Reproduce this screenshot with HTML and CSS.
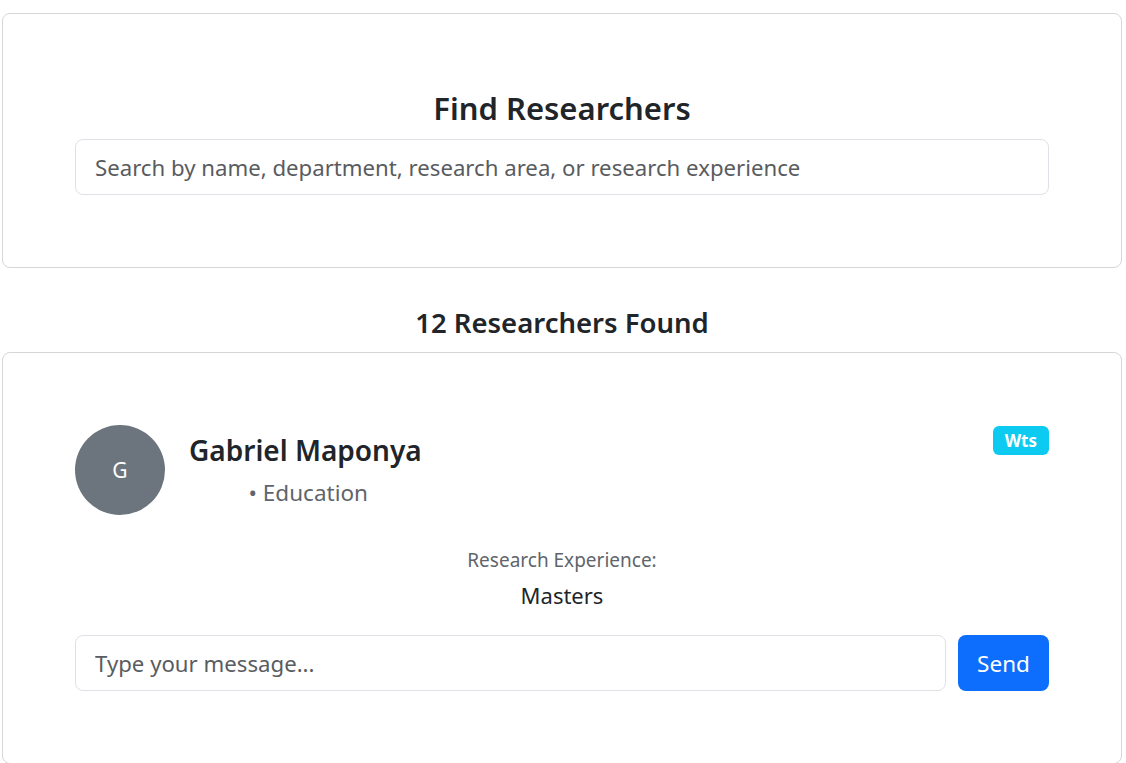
FILE: index.html
```html
<!DOCTYPE html>
<html lang="en">
<head>
<meta charset="utf-8">
<title>Find Researchers</title>
<link rel="stylesheet" href="styles.css">
</head>
<body>
<div class="page">
  <section class="card search-card">
    <h2 class="title">Find Researchers</h2>
    <input class="field" type="text" placeholder="Search by name, department, research area, or research experience">
  </section>

  <h3 class="count">12 Researchers Found</h3>

  <section class="card result-card">
    <div class="head">
      <div class="avatar">G</div>
      <div class="who">
        <div class="name">Gabriel Maponya</div>
        <div class="dept"> • Education</div>
      </div>
      <span class="badge">Wts</span>
    </div>
    <div class="exp">
      <div class="exp-label">Research Experience:</div>
      <div class="exp-value">Masters</div>
    </div>
    <div class="msg">
      <input class="field" type="text" placeholder="Type your message...">
      <button class="send" type="button">Send</button>
    </div>
  </section>
</div>
</body>
</html>
```

FILE: styles.css
```css
* { box-sizing: border-box; }
html, body { margin: 0; padding: 0; background: #fff; }
body {
  font-family: "Noto Sans", "Open Sans", sans-serif;
  color: #212529;
}
.page {
  width: 1120px;
  margin-left: 2px;
  padding-top: 13px;
}
.card {
  border: 1px solid #d6d6d6;
  border-radius: 8px;
  background: #fff;
  padding: 72px;
}
.search-card {
  padding-top: 75px;
  padding-bottom: 72px;
}
.title {
  margin: 0 0 12px;
  text-align: center;
  font-size: 31px;
  font-weight: 600;
  line-height: 38px;
}
.field {
  display: block;
  width: 100%;
  height: 56px;
  border: 1px solid #dee2e6;
  border-radius: 8px;
  padding: 0 19px;
  font-family: inherit;
  font-size: 22.2px;
  color: #212529;
  background: #fff;
  outline: none;
}
.field::placeholder { color: #595c5f; }
.count {
  margin: 38px 0 12px;
  text-align: center;
  font-size: 27.5px;
  font-weight: 600;
  line-height: 34px;
}
.result-card {
  padding-bottom: 72px;
}
.head {
  display: flex;
  align-items: flex-start;
  gap: 24px;
}
.avatar {
  width: 90px;
  height: 90px;
  flex: none;
  border-radius: 50%;
  background: #6c757d;
  color: #fff;
  display: flex;
  align-items: center;
  justify-content: center;
  font-size: 21px;
}
.who {
  text-align: center;
  padding-top: 6px;
}
.name {
  font-size: 28px;
  font-weight: 600;
  line-height: 38px;
}
.dept {
  font-size: 22.5px;
  line-height: 32px;
  color: #5f656b;
  white-space: pre;
  margin-top: 8px;
}
.badge {
  margin-left: auto;
  background: #0dcaf0;
  color: #fff;
  font-weight: 700;
  font-size: 17px;
  line-height: 29px;
  padding: 0 12px;
  border-radius: 6px;
  margin-top: 1px;
}
.exp {
  text-align: center;
  margin-top: 32px;
}
.exp-label {
  font-size: 19px;
  line-height: 26px;
  color: #5f656b;
}
.exp-value {
  font-size: 22px;
  line-height: 32px;
  margin-top: 6px;
}
.msg {
  display: flex;
  gap: 12px;
  margin-top: 24px;
}
.msg .field { flex: 1; }
.send {
  flex: none;
  width: 91px;
  height: 56px;
  border: none;
  border-radius: 8px;
  background: #0d6efd;
  color: #fff;
  font-family: inherit;
  font-size: 22.5px;
}
```
